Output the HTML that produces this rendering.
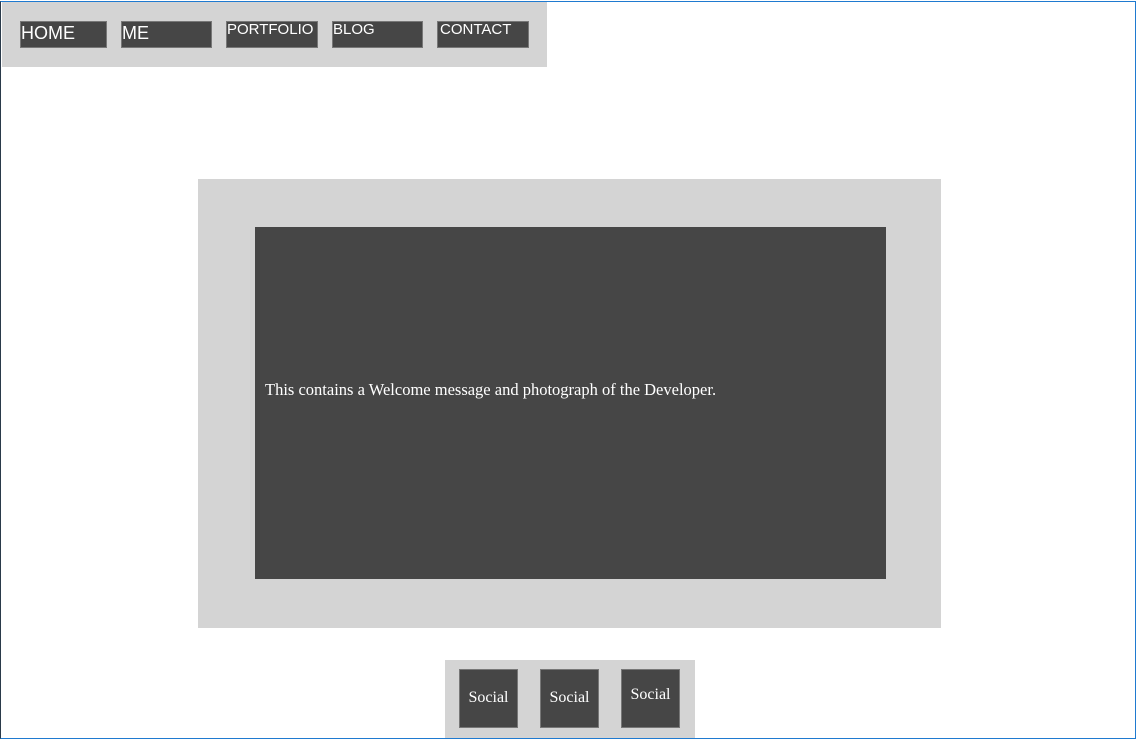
<!DOCTYPE html>
<html><head><style>
body{margin:0;width:1136px;height:739px;position:relative;background:#fff;overflow:hidden}
.a{position:absolute}
.frame{left:0;top:1px;width:1134px;height:736px;border-style:solid;border-width:1px;border-color:#1f7ad0 #1f7ad0 #1f7ad0 #2a3a4a;}
.g{background:#d4d4d4}
.d{background:#464646;color:#fff;box-sizing:border-box;border:1px solid #777}
.n{font-family:"Liberation Sans",sans-serif;line-height:1;white-space:nowrap}
.s{font-family:"Liberation Serif",serif;font-size:16px;text-align:center}
</style></head><body>
<div class="a frame"></div>
<div class="a g" style="left:2px;top:2px;width:545px;height:65px"></div>
<div class="a d n" style="left:20px;top:21px;width:87px;height:27px;font-size:18px;padding-top:2px">HOME</div>
<div class="a d n" style="left:121px;top:21px;width:91px;height:27px;font-size:18px;padding-top:2px">ME</div>
<div class="a d n" style="left:226px;top:21px;width:92px;height:27px;font-size:15px">PORTFOLIO</div>
<div class="a d n" style="left:332px;top:21px;width:91px;height:27px;font-size:15px">BLOG</div>
<div class="a d n" style="left:437px;top:21px;width:92px;height:27px;font-size:15px;padding-left:2px">CONTACT</div>
<div class="a g" style="left:198px;top:179px;width:743px;height:449px"></div>
<div class="a" style="left:255px;top:227px;width:631px;height:352px;background:#464646"></div>
<div class="a" style="left:265px;top:380px;color:#fff;font-family:'Liberation Serif',serif;font-size:16.5px;white-space:nowrap">This contains a Welcome message and photograph of the Developer.</div>
<div class="a g" style="left:445px;top:660px;width:250px;height:78px"></div>
<div class="a d s" style="left:459px;top:669px;width:59px;height:59px;line-height:56px">Social</div>
<div class="a d s" style="left:540px;top:669px;width:59px;height:59px;line-height:56px">Social</div>
<div class="a d s" style="left:621px;top:669px;width:59px;height:59px;line-height:50px">Social</div>
</body></html>
